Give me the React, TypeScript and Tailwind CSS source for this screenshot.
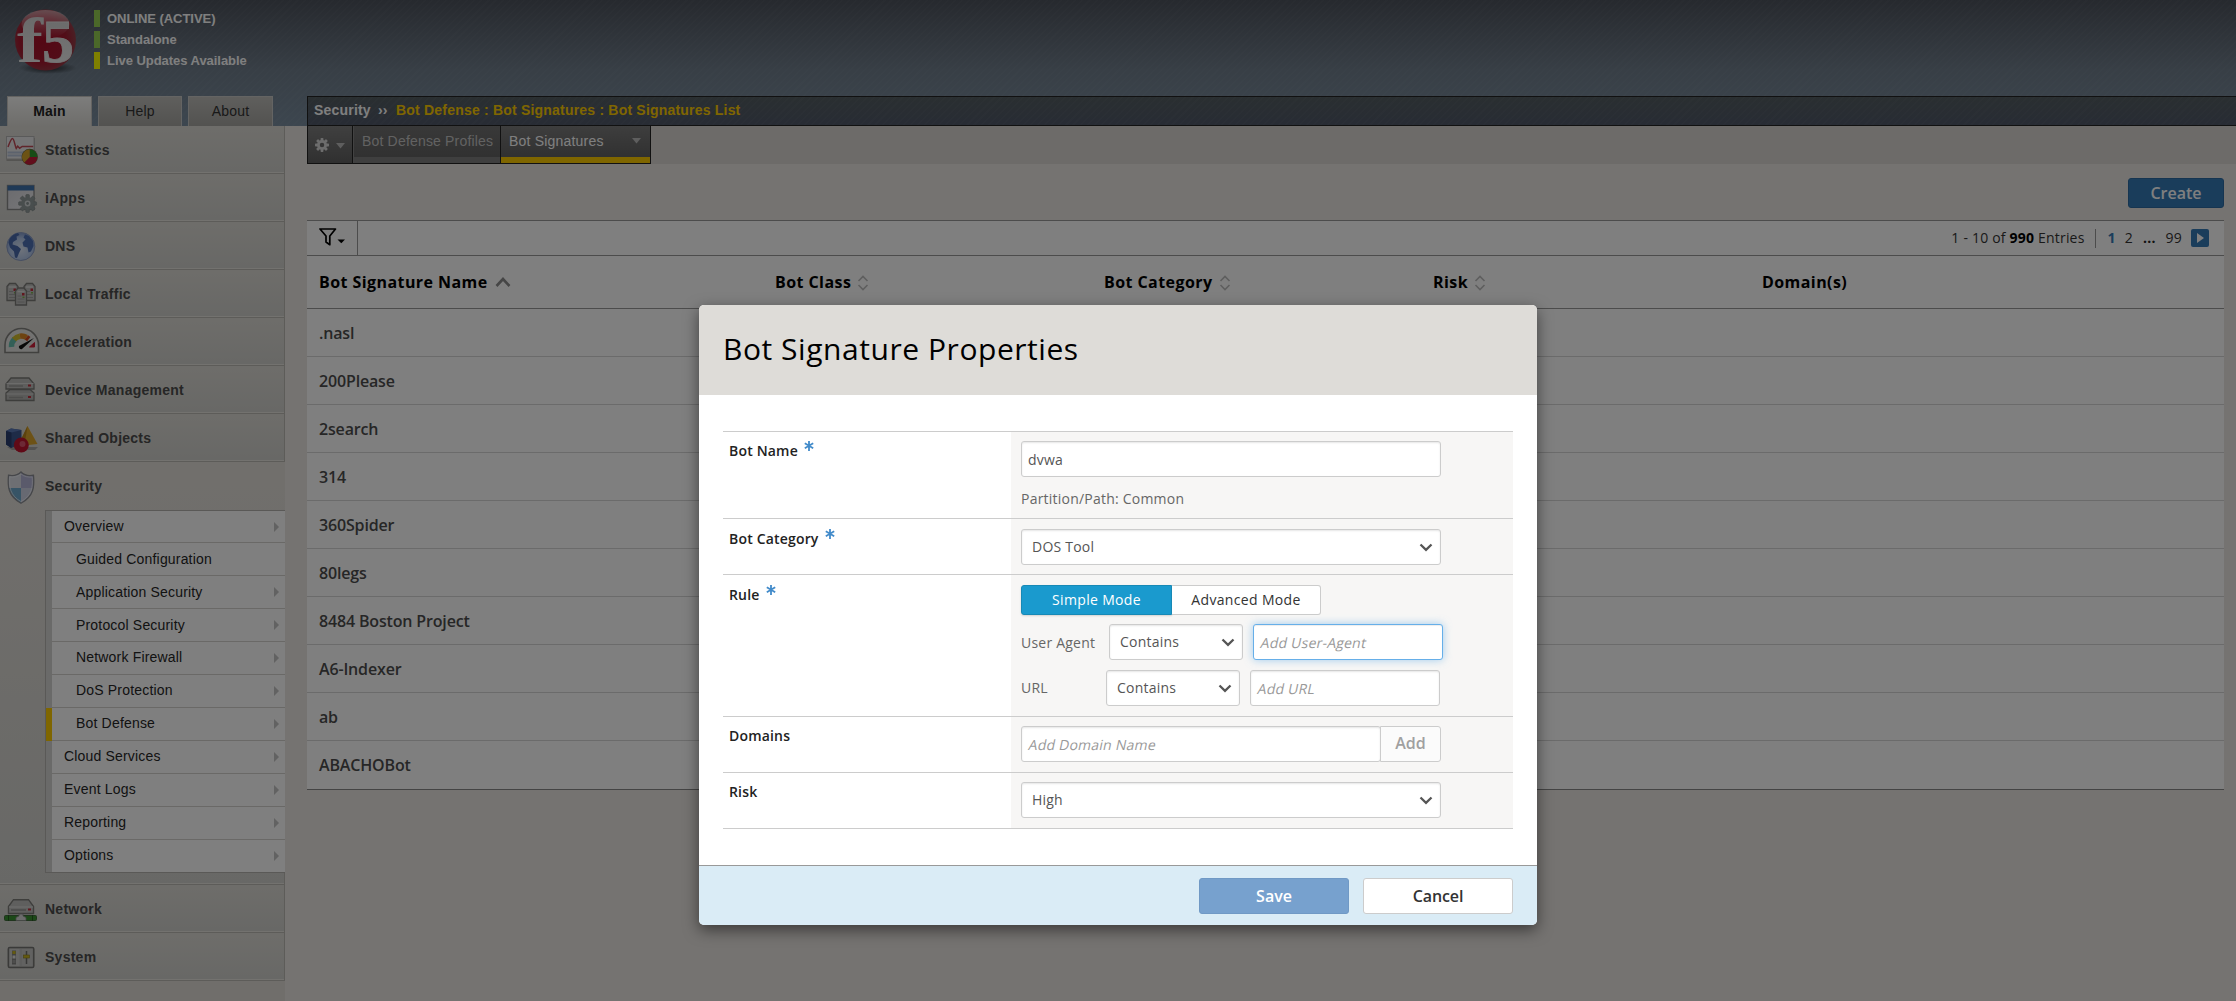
import React from "react";

const ARIAL = "font-['Liberation_Sans',Arial,sans-serif]";
const OPEN = "font-['Open_Sans',sans-serif]";

function Gear({ cx, cy, r, fill, hole, stroke }: { cx: number; cy: number; r: number; fill: string; hole: string; stroke?: string }) {
  return (
    <g transform={`translate(${cx} ${cy})`}>
      {[0, 45, 90, 135].map((a) => (
        <rect key={a} x={-r * 0.2} y={-r} width={r * 0.4} height={r * 2} rx={r * 0.1} fill={fill} stroke={stroke} strokeWidth={0.6} transform={`rotate(${a})`} />
      ))}
      <circle r={r * 0.7} fill={fill} />
      <circle r={r * 0.32} fill={hole} />
    </g>
  );
}

function StatisticsIcon() {
  return (
    <svg width="45" height="48" viewBox="0 0 45 48" className="shrink-0">
      <rect x="6.5" y="12" width="28.5" height="23" fill="#8e8c88" opacity="0.6" />
      <rect x="6.5" y="10.5" width="27.5" height="22.5" fill="#e9e9ea" stroke="#b5b5b5" />
      <path d="M7.5 26.5h26M7.5 29.5h26" stroke="#b9c5da" strokeWidth="2" />
      <path d="M8 21c1.500-4 3-8.500 4.500-8.500S15 20 16.200 22.500l1.500-2.300 2 2 2.500-1.700h11" fill="none" stroke="#c04a56" strokeWidth="1.500" />
      <circle cx="29.7" cy="31" r="8.2" fill="#6b6b4a" />
      <path d="M29.7 31V23.4A7.6 7.6 0 0 1 37.3 31z" fill="#2f9a2c" />
      <path d="M29.7 31h7.6a7.6 7.6 0 0 1-13 5.4z" fill="#c41d38" />
      <path d="M29.7 31l-5.4 5.4A7.6 7.6 0 0 1 29.7 23.4z" fill="#d9a528" />
    </svg>
  );
}

function IAppsIcon() {
  return (
    <svg width="45" height="48" viewBox="0 0 45 48" className="shrink-0">
      <defs>
        <linearGradient id="win" x1="0" y1="0" x2="1" y2="1">
          <stop offset="0" stopColor="#d5d5dc" />
          <stop offset="1" stopColor="#efeff1" />
        </linearGradient>
      </defs>
      <rect x="7.5" y="11.5" width="26.5" height="24" fill="url(#win)" stroke="#8b8b8b" strokeWidth="1.4" />
      <rect x="7.5" y="11.5" width="26.5" height="5" fill="#3e73ad" />
      <Gear cx={27.6} cy={29.5} r={9} fill="#929c9c" hole="#d5d9da" stroke="#7f8888" />
      <circle cx="27.6" cy="29.5" r="1.4" fill="#8a9494" />
    </svg>
  );
}

function DnsIcon() {
  return (
    <svg width="45" height="48" viewBox="0 0 45 48" className="shrink-0">
      <defs>
        <radialGradient id="globe" cx="0.5" cy="0.6" r="0.55">
          <stop offset="0" stopColor="#dfe8f7" />
          <stop offset="0.7" stopColor="#b4c8ea" />
          <stop offset="1" stopColor="#8aa2d2" />
        </radialGradient>
      </defs>
      <circle cx="20.8" cy="24.5" r="14" fill="url(#globe)" stroke="#8c9cc2" />
      <path d="M9.500 17c2-3 5-5.500 8.500-6l1.500 2-3 1.500.500 3-4 2.500-.5 2.500 5 1.500 3.500 3-2 4-2 5-2-.5-1-6-4-4-1.500-5z" fill="#4a6aad" />
      <path d="M25 12.500l4 1.500 4 5 .5 5-2.500 5.500-2.500 1-1-5-4-1-1-4 3-3-2-2z" fill="#4f71b4" />
    </svg>
  );
}

function Tower({ x, y }: { x: number; y: number }) {
  return (
    <g transform={`translate(${x} ${y})`}>
      <path d="M0 3.500L2.500.500h6L11 3.500V17.500H0z" fill="#bfbfbd" stroke="#7c7c79" strokeWidth="1.300" />
      <path d="M2 4h7" stroke="#dcdcda" strokeWidth="1.500" />
      <path d="M2 8.500h4M2 11.500h7M2 14.500h7" stroke="#a0a09e" />
      <rect x="6.500" y="5.500" width="2.500" height="2.500" fill="#c22e3c" />
      <rect x="7" y="9" width="2" height="1.500" fill="#7ab04a" />
    </g>
  );
}

function LocalTrafficIcon() {
  return (
    <svg width="45" height="48" viewBox="0 0 45 48" className="shrink-0">
      <Tower x={7} y={13} />
      <Tower x={24} y={13} />
      <Tower x={15.5} y={17.5} />
    </svg>
  );
}

function AccelerationIcon() {
  return (
    <svg width="45" height="48" viewBox="0 0 45 48" className="shrink-0">
      <path d="M5 34.500V27C5 18 12 10.500 21.500 10.500S38.500 18 38.500 27v7.500z" fill="#e4e4e2" stroke="#83827f" strokeWidth="1.600" />
      <path d="M11.500 29a10 10 0 0 1 3.200-8" fill="none" stroke="#67bfae" strokeWidth="5.500" />
      <path d="M14 21.500a10 10 0 0 1 6-3.300" fill="none" stroke="#d2bd2c" strokeWidth="5.500" />
      <path d="M20 18.200a10 10 0 0 1 6.500 1.200" fill="none" stroke="#dd8722" strokeWidth="5.500" />
      <path d="M26.500 19.400l2.300 1.700" fill="none" stroke="#d0451f" strokeWidth="5.500" />
      <path d="M29.500 29l5-4.500V29z" fill="#d0203a" stroke="#d0203a" />
      <path d="M34 20L19 28a2.300 2.300 0 0 0 3 3z" fill="#111" />
    </svg>
  );
}

function DeviceIcon() {
  return (
    <svg width="45" height="48" viewBox="0 0 45 48" className="shrink-0">
      <path d="M6 34.500v-7.500l4-3.500h20l4 3.500v7.500z" fill="#b4b4b2" stroke="#7a7a77" strokeWidth="1.300" />
      <path d="M6.500 28h27" stroke="#d5d5d3" />
      <path d="M6 23v-5l5-6h18l5 6v5z" fill="#bcbcba" stroke="#7a7a77" strokeWidth="1.300" />
      <path d="M6.500 17.500h27" stroke="#d9d9d7" />
      <path d="M9 20h14M9 31.500h14" stroke="#9a9a98" strokeWidth="1.500" />
      <rect x="28" y="18.500" width="3" height="2" fill="#c2303f" />
      <rect x="28" y="30" width="3" height="2" fill="#c2303f" />
    </svg>
  );
}

function SharedIcon() {
  return (
    <svg width="45" height="48" viewBox="0 0 45 48" className="shrink-0">
      <path d="M7 33h31l-3 3H12z" fill="#777" opacity="0.5" />
      <path d="M6 17l5-2.500 10.500 1.500v14L11 34l-5-3.500z" fill="#3c568f" />
      <path d="M6 17l5.500 1.500L21.500 16 11 14.500z" fill="#5b78b5" />
      <path d="M6 17l5.500 1.500V34L6 30.500z" fill="#2a3f70" />
      <path d="M27.500 12L37.500 30l-13 1.500-3-7z" fill="#dba52c" />
      <path d="M27.500 12l-6 12.500 3 7z" fill="#b8841c" />
      <circle cx="21.300" cy="31" r="7.500" fill="#c0142e" />
      <circle cx="22.500" cy="30" r="3" fill="#e0637a" opacity="0.8" />
    </svg>
  );
}

function ShieldIcon() {
  return (
    <svg width="45" height="48" viewBox="0 0 45 48" className="shrink-0">
      <defs>
        <clipPath id="shield">
          <path d="M21 10c3 3 8 4 12.500 3.200 1 11 .5 21-12.500 28-13-7-13.500-17-12.500-28C13 14 18 13 21 10z" />
        </clipPath>
      </defs>
      <g clipPath="url(#shield)">
        <rect x="6" y="8" width="15" height="18" fill="#dcdfe6" />
        <rect x="21" y="8" width="14" height="18" fill="#b4b4d6" />
        <rect x="6" y="26" width="15" height="17" fill="#6fa9cc" />
        <rect x="21" y="26" width="14" height="17" fill="#cfd2e4" />
      </g>
      <path d="M21 10c3 3 8 4 12.500 3.200 1 11 .5 21-12.500 28-13-7-13.500-17-12.500-28C13 14 18 13 21 10z" fill="none" stroke="#8c8e94" strokeWidth="1.300" />
      <path d="M21 12c3 2.600 7.500 3.500 11.200 3 .7 10-.2 18.500-11.200 24.600-11-6.100-11.900-14.600-11.200-24.600C13.500 15.500 18 14.600 21 12z" fill="none" stroke="#f2f4f8" strokeOpacity="0.700" />
    </svg>
  );
}

function NetworkIcon() {
  return (
    <svg width="45" height="48" viewBox="0 0 45 48" className="shrink-0">
      <path d="M8.500 28.500v-7l5-6.800h15l5 6.800v7z" fill="#bfbfbd" stroke="#7c7c79" strokeWidth="1.400" />
      <path d="M9 22h24" stroke="#dededc" />
      <path d="M11 25h15" stroke="#959593" strokeWidth="1.500" />
      <rect x="28" y="23.500" width="3" height="2" fill="#c2303f" />
      <rect x="4.500" y="30.500" width="32" height="5" rx="1" fill="#389330" stroke="#3f6a3a" />
      <path d="M8.500 30v6M32.500 30v6" stroke="#245c20" />
      <path d="M16 35.500v-3l3-1.500v-2h4v2l3 1.500v3z" fill="#d8d8d8" stroke="#8b8b8b" strokeWidth="0.800" />
    </svg>
  );
}

function SystemIcon() {
  return (
    <svg width="45" height="48" viewBox="0 0 45 48" className="shrink-0">
      <rect x="8.300" y="14.500" width="25.500" height="20" rx="1.500" fill="#bcbcba" stroke="#757572" strokeWidth="1.500" />
      <rect x="10" y="16" width="9.500" height="17" fill="#cccccb" />
      <rect x="22" y="16" width="10" height="17" fill="#c4c4c2" />
      <rect x="12" y="17.500" width="4" height="14" fill="#858583" />
      <rect x="12.500" y="18" width="3" height="3" fill="#c8b420" />
      <rect x="12.500" y="22.500" width="3" height="3" fill="#e4e4e2" />
      <rect x="12.500" y="27" width="3" height="3" fill="#9c9c9a" />
      <path d="M26.500 18v13" stroke="#6f6f6d" strokeWidth="1.500" />
      <rect x="23.500" y="22" width="6" height="3" fill="#c8b420" stroke="#8b7d1c" strokeWidth="0.600" />
    </svg>
  );
}

const topMenu = [
  { label: "Statistics", Icon: StatisticsIcon },
  { label: "iApps", Icon: IAppsIcon },
  { label: "DNS", Icon: DnsIcon },
  { label: "Local Traffic", Icon: LocalTrafficIcon },
  { label: "Acceleration", Icon: AccelerationIcon },
  { label: "Device Management", Icon: DeviceIcon },
  { label: "Shared Objects", Icon: SharedIcon },
];

const bottomMenu = [
  { label: "Network", Icon: NetworkIcon },
  { label: "System", Icon: SystemIcon },
];

const subMenu = [
  { label: "Overview", arrow: true },
  { label: "Guided Configuration", sub: true },
  { label: "Application Security", sub: true, arrow: true },
  { label: "Protocol Security", sub: true, arrow: true },
  { label: "Network Firewall", sub: true, arrow: true },
  { label: "DoS Protection", sub: true, arrow: true },
  { label: "Bot Defense", sub: true, arrow: true, active: true },
  { label: "Cloud Services", arrow: true },
  { label: "Event Logs", arrow: true },
  { label: "Reporting", arrow: true },
  { label: "Options", arrow: true },
];

const raised = ["Overview", "Network Firewall", "DoS Protection", "Bot Defense", "Cloud Services", "Event Logs", "Reporting", "Options"];

function MenuItem({ label, Icon }: { label: string; Icon: () => React.ReactElement }) {
  return (
    <div className="flex h-12 items-center border-r border-b border-[#bab8b3] bg-linear-to-b from-[#dddbd5] to-[#d0d0cc] shadow-[inset_0_-1px_0_#e6e4df]">
      <Icon />
      <span className="text-sm font-bold tracking-[0.260px] text-[#4c4c4c]">{label}</span>
    </div>
  );
}

function Logo() {
  return (
    <svg width="94" height="80" viewBox="0 0 94 80" className="shrink-0">
      <defs>
        <radialGradient id="ball" cx="0.45" cy="0.5" r="0.58">
          <stop offset="0" stopColor="#a80f28" />
          <stop offset="0.65" stopColor="#a51a30" />
          <stop offset="1" stopColor="#93474f" />
        </radialGradient>
        <linearGradient id="gloss" x1="0" y1="0" x2="0" y2="1">
          <stop offset="0" stopColor="#fff" stopOpacity="0.5" />
          <stop offset="1" stopColor="#fff" stopOpacity="0" />
        </linearGradient>
        <radialGradient id="ballShade">
          <stop offset="0" stopColor="#000" stopOpacity="0.7" />
          <stop offset="1" stopColor="#000" stopOpacity="0" />
        </radialGradient>
        <linearGradient id="glyph" x1="0" y1="0" x2="0" y2="1">
          <stop offset="0" stopColor="#cfcfcf" />
          <stop offset="1" stopColor="#f2f2f2" />
        </linearGradient>
      </defs>
      <ellipse cx="48" cy="68" rx="29" ry="6" fill="url(#ballShade)" />
      <circle cx="45.500" cy="40" r="30.500" fill="url(#ball)" />
      <ellipse cx="45.500" cy="24" rx="24" ry="14" fill="url(#gloss)" />
      <g fill="url(#glyph)" fontFamily="Liberation Serif, serif" fontWeight="700">
        <text transform="translate(17 61.500) scale(1.220 1)" fontSize="64">f</text>
        <text transform="translate(42 61.500) scale(1.050 1)" fontSize="61" stroke="#e4e4e4" strokeWidth="0.800">5</text>
      </g>
    </svg>
  );
}

function Sidebar() {
  return (
    <nav className={`${ARIAL} flex w-[285px] shrink-0 flex-col bg-[#e0ddd7]`}>
      {topMenu.map((m) => (
        <MenuItem key={m.label} {...m} />
      ))}
      <div className="flex h-[423px] flex-col border-b border-[#bab8b3] bg-linear-to-b from-[#e3dfd9] to-[#d1d1cd] shadow-[inset_0_-1px_0_#e6e4df]">
        <div className="flex h-12 shrink-0 items-center">
          <ShieldIcon />
          <span className="text-sm font-bold tracking-[0.260px] text-[#4c4c4c]">Security</span>
        </div>
        <div className="ml-[45px] flex h-[363px] flex-col border-y border-l border-[#b4b2ae]">
          {subMenu.map((s) => (
            <div key={s.label} className="flex h-[33px] shrink-0 first:h-8 last:h-8">
              <div className={s.active ? "w-[6px] bg-[#ffcc00]" : "w-[6px] bg-[#d4d4d2]"} />
              <div
                className={`${s.sub ? "pl-6" : "pl-3"} ${s.label === "Options" ? "" : "border-b border-[#d4d2cf]"} flex flex-1 items-center justify-between bg-white pr-[6px]`}
              >
                <span className={`${raised.includes(s.label) ? "pb-[2px]" : ""} text-sm tracking-[0.180px] text-[#262626]`}>{s.label}</span>
                {s.arrow && (
                  <svg width="5" height="10" viewBox="0 0 5 10">
                    <path d="M0 0l5 5-5 5z" fill="#c4c4c4" />
                  </svg>
                )}
              </div>
            </div>
          ))}
        </div>
        <div className="flex-1 border-r border-[#bab8b3]" />
      </div>
      {bottomMenu.map((m) => (
        <MenuItem key={m.label} {...m} />
      ))}
    </nav>
  );
}

function Status({ color, text }: { color: string; text: string }) {
  return (
    <div className="flex h-[21px] items-center">
      <div className={`h-[17px] w-[6px] ${color}`} />
      <span className="ml-[7px] text-[13px] font-bold tracking-[-0.040px] text-white">{text}</span>
    </div>
  );
}

function Header() {
  return (
    <header
      className={`${ARIAL} flex h-[126px] bg-[repeating-linear-gradient(135deg,rgba(255,255,255,0.025)_0_1.500px,transparent_1.500px_5px),linear-gradient(to_bottom,#4d535d_0px,#707e8c_70px,#7a8d9f_126px)]`}
    >
      <div className="flex w-[307px] shrink-0 flex-col justify-between">
        <div className="flex">
          <Logo />
          <div className="pt-2">
            <Status color="bg-[#96d152]" text="ONLINE (ACTIVE)" />
            <Status color="bg-[#96d152]" text="Standalone" />
            <Status color="bg-[#ffff00]" text="Live Updates Available" />
          </div>
        </div>
        <div className="flex gap-[6px] pl-[7px] text-sm">
          <div className="flex h-[30px] w-[85px] items-center justify-center border border-b-0 border-[#c9c7c3] bg-linear-to-b from-[#fafaf8] to-[#dddbd6] pb-px font-bold tracking-[0.100px] text-[#222]">Main</div>
          <div className="flex h-[30px] w-[84px] items-center justify-center border border-b-0 border-[#c9c9c7] bg-linear-to-b from-[#bfbeba] to-[#a6a5a1] pb-[2px] tracking-[0.200px] text-[#333]">Help</div>
          <div className="flex h-[30px] w-[85px] items-center justify-center border border-b-0 border-[#c9c9c7] bg-linear-to-b from-[#bfbeba] to-[#a6a5a1] pb-[2px] tracking-[0.200px] text-[#333]">About</div>
        </div>
      </div>
      <div className="mt-24 flex h-[30px] flex-1 items-center border-y border-l border-[#222] bg-[repeating-linear-gradient(135deg,rgba(255,255,255,0.025)_0_1.500px,transparent_1.500px_5px),linear-gradient(to_bottom,#545e62,#505869)] pb-[2px] pl-[6px] text-sm font-bold tracking-[0.200px]">
        <span className="w-[64px] text-white">Security</span>
        <span className="w-[18px] text-white">››</span>
        <span className="text-[#ffcc00]">Bot Defense : Bot Signatures : Bot Signatures List</span>
      </div>
    </header>
  );
}

function TabStrip() {
  return (
    <div className={`${ARIAL} flex h-[38px] bg-[#dad7d3] text-sm tracking-[0.200px]`}>
      <div className="flex w-[46px] items-center gap-[6px] border-r border-b border-l border-[#222] bg-linear-to-b from-[#808080] to-[#606060] pl-[6px]">
        <svg width="16" height="16" viewBox="0 0 16 16">
          <Gear cx={8} cy={8} r={7} fill="#dadada" hole="#6c6c6c" />
        </svg>
        <svg width="10" height="6" viewBox="0 0 10 6" className="mt-[3px]">
          <path d="M0 0h9L4.500 5.500z" fill="#bcbcbc" />
        </svg>
      </div>
      <div className="flex w-[148px] items-start border-r border-b border-[#222] bg-[linear-gradient(to_bottom,#727272_0px,#626262_31px,#7e7e7e_31px)] pt-[5px] pl-[9px] text-[#c4c4c4] shadow-[inset_1px_0_0_#848484]">
        <span className="tracking-[0.180px] whitespace-nowrap">Bot Defense Profiles</span>
      </div>
      <div className="flex w-[150px] items-start justify-between border-r border-b border-[#222] bg-[linear-gradient(to_bottom,#7c7c7c_0px,#626262_31px,#ffcc00_31px)] pt-[5px] pr-2 pl-2 text-white">
        Bot Signatures
        <svg width="10" height="6" viewBox="0 0 10 6" className="mt-[7px]">
          <path d="M0 0h9L4.500 5.500z" fill="#bcbcbc" />
        </svg>
      </div>
    </div>
  );
}

function SortIcon() {
  return (
    <svg width="12" height="16" viewBox="0 0 12 16" className="mt-[2px] ml-[6px]">
      <path d="M1.500 6L6 1.500 10.500 6M1.500 10L6 14.500 10.500 10" fill="none" stroke="#bdbdbd" strokeWidth="1.600" />
    </svg>
  );
}

const names = [".nasl", "200Please", "2search", "314", "360Spider", "80legs", "8484 Boston Project", "A6-Indexer", "ab", "ABACHOBot"];

function SignatureTable() {
  return (
    <section className={`${OPEN} mr-3`}>
      <div className="flex h-14 justify-end pt-[14px]">
        <div className="flex h-[30px] w-24 items-center justify-center rounded-[3px] border border-[#2d6ba3] bg-[#357bb7] text-base font-semibold text-white">Create</div>
      </div>
      <div className="border-t border-b border-t-[#999] border-b-[#888] bg-white">
        <div className="flex h-[35px] items-center justify-between border-b border-[#999]">
          <div className="flex h-full w-[51px] items-center border-r border-[#999] pb-[2px] pl-3">
            <svg width="27" height="20" viewBox="0 0 27 20">
              <path d="M1 2h15.500L10.800 9v8.700L7 15V9z" fill="none" stroke="#000" strokeWidth="1.700" strokeLinejoin="round" />
              <path d="M18.500 12.500h7.500L22.300 16.200z" fill="#000" />
            </svg>
          </div>
          <div className="flex items-center pr-[15px] text-sm tracking-[0.200px] text-[#333]">
            <span>1 - 10 of <b className="text-black">990</b> Entries</span>
            <span className="ml-[10px] h-[19px] w-px bg-[#999]" />
            <span className="ml-3 font-bold text-[#357bb7]">1</span>
            <span className="ml-[9px]">2</span>
            <span className="ml-[10px] font-bold text-[#222]">...</span>
            <span className="ml-[10px]">99</span>
            <span className="ml-[9px] flex size-[18px] items-center justify-center rounded-[2px] bg-[#357bb7]">
              <svg width="10" height="10" viewBox="0 0 10 10">
                <path d="M2 0l7 5-7 5z" fill="#fff" />
              </svg>
            </span>
          </div>
        </div>
        <div className="grid h-[53px] grid-cols-[457px_329px_329px_329px_1fr] items-center border-b border-[#999] text-base font-bold tracking-[0.430px] text-black">
          <div className="flex items-center pl-3">
            Bot Signature Name
            <svg width="16" height="10" viewBox="0 0 16 10" className="ml-[7px]">
              <path d="M1.500 9L8 2l6.500 7" fill="none" stroke="#8c8c8c" strokeWidth="2.600" />
            </svg>
          </div>
          <div className="flex items-center pl-[11px]">Bot Class<SortIcon /></div>
          <div className="flex items-center pl-[11px]">Bot Category<SortIcon /></div>
          <div className="flex items-center pl-[11px]">Risk<SortIcon /></div>
          <div className="pl-[11px]">Domain(s)</div>
        </div>
        {names.map((n) => (
          <div key={n} className="flex h-12 items-center border-b border-[#d6d6d6] pl-3 text-base font-semibold tracking-[-0.160px] text-[#4d4d4d] last:border-b-0">
            {n}
          </div>
        ))}
      </div>
    </section>
  );
}

const box = "flex items-center rounded-[3px] border border-[#ccc] bg-white shadow-[inset_0_1px_2px_rgba(0,0,0,0.100)]";

function Select({ value, width }: { value: string; width: string }) {
  return (
    <div className={`${box} ${width} h-9 justify-between pr-[7px] pl-[10px] text-[#555]`}>
      {value}
      <svg width="14" height="9" viewBox="0 0 14 9" className="mt-px">
        <path d="M1.500 1.500L7 6.800l5.500-5.300" fill="none" stroke="#555" strokeWidth="2.300" />
      </svg>
    </div>
  );
}

function Placeholder({ children }: { children: string }) {
  return <span className="inline-block -skew-x-12 pt-px tracking-[0.220px] text-[#999]">{children}</span>;
}

function Required() {
  return (
    <svg width="10" height="12" viewBox="0 0 10 12" className="ml-[6px]">
      <path d="M5 0v10M0.800 2.300l8.400 5M9.200 2.300l-8.400 5" stroke="#428bca" strokeWidth="1.800" />
    </svg>
  );
}

function Row({ label, required, height, pad, children }: { label: string; required?: boolean; height: string; pad: string; children: React.ReactNode }) {
  return (
    <div className={`${height} flex border-b border-[#ccc]`}>
      <div className={`${pad} flex h-fit w-72 items-start pl-[6px] font-semibold tracking-[0.180px] text-[#222]`}>
        {label}
        {required && <Required />}
      </div>
      <div className="flex-1 bg-[#f7f6f5] pl-[10px] text-[#666]">{children}</div>
    </div>
  );
}

function Modal() {
  return (
    <div className={`${OPEN} flex h-[620px] w-[838px] flex-col overflow-hidden rounded-[5px] bg-white shadow-[0_5px_15px_rgba(0,0,0,0.500)]`}>
      <div className="flex h-[90px] items-center bg-[#dedcd8] pb-[3px] pl-6 text-[30px] tracking-[0.550px] text-black">Bot Signature Properties</div>
      <div className="mx-6 mt-9 h-[434px] border-t border-[#ccc] text-sm leading-5 tracking-[0.220px]">
        <Row label="Bot Name" required height="h-[87px]" pad="pt-[9px]">
          <div className={`${box} mt-[9px] h-9 w-[420px] pt-px pl-[6px] text-[#555]`}>dvwa</div>
          <div className="mt-3">Partition/Path: Common</div>
        </Row>
        <Row label="Bot Category" required height="h-14" pad="pt-[10px]">
          <div className="mt-[10px]"><Select value="DOS Tool" width="w-[420px]" /></div>
        </Row>
        <Row label="Rule" required height="h-[142px]" pad="pt-[10px]">
          <div className="mt-[10px] flex h-[30px] tracking-[0.330px]">
            <div className="flex w-[151px] items-center justify-center rounded-l-[3px] border border-[#1789b6] bg-[#1a9ace] text-white shadow-[0_1px_2px_rgba(0,0,0,0.150)]">Simple Mode</div>
            <div className="flex w-[149px] items-center justify-center rounded-r-[3px] border border-l-0 border-[#ccc] bg-white text-[#333]">Advanced Mode</div>
          </div>
          <div className="mt-[9px] flex items-center">
            <span className="w-[88px] pt-px">User Agent</span>
            <Select value="Contains" width="w-[134px]" />
            <div className="ml-[10px] flex h-9 w-[190px] items-center rounded-[3px] border border-[#66afe9] bg-white pl-[7px] shadow-[inset_0_1px_1px_rgba(0,0,0,0.075),0_0_8px_rgba(102,175,233,0.600)]">
              <Placeholder>Add User-Agent</Placeholder>
            </div>
          </div>
          <div className="mt-[10px] flex items-center">
            <span className="w-[85px]">URL</span>
            <Select value="Contains" width="w-[134px]" />
            <div className={`${box} ml-[10px] h-9 w-[190px] pl-[7px]`}>
              <Placeholder>Add URL</Placeholder>
            </div>
          </div>
        </Row>
        <Row label="Domains" height="h-14" pad="pt-[9px]">
          <div className="mt-[9px] flex">
            <div className={`${box} h-9 w-[360px] pt-px pl-[7px]`}>
              <Placeholder>Add Domain Name</Placeholder>
            </div>
            <div className="-ml-px flex h-9 w-[61px] items-center justify-center rounded-r-[3px] border border-[#ccc] bg-[#fbfbfb] pb-[3px] text-base font-semibold tracking-normal text-[#a0a0a0]">Add</div>
          </div>
        </Row>
        <Row label="Risk" height="h-14" pad="pt-[9px]">
          <div className="mt-[9px]"><Select value="High" width="w-[420px]" /></div>
        </Row>
      </div>
      <div className="flex h-[60px] gap-[14px] border-t border-[#999] bg-[#daecf6] pt-3 pl-[500px] text-base font-semibold">
        <div className="flex h-9 w-[150px] items-center justify-center rounded-[3px] border border-[#7099c5] bg-[#77a1ce] text-white">Save</div>
        <div className="flex h-9 w-[150px] items-center justify-center rounded-[3px] border border-[#ccc] bg-white tracking-[-0.100px] text-[#333]">Cancel</div>
      </div>
    </div>
  );
}

export default function App() {
  return (
    <div className="relative h-[1001px] w-full overflow-hidden bg-[#ebe7e2]">
      <Header />
      <div className="flex h-[875px]">
        <Sidebar />
        <main className="ml-[22px] flex-1">
          <TabStrip />
          <SignatureTable />
        </main>
      </div>
      <div className="absolute inset-0 flex items-start justify-center bg-black/50 pt-[305px]">
        <Modal />
      </div>
    </div>
  );
}
